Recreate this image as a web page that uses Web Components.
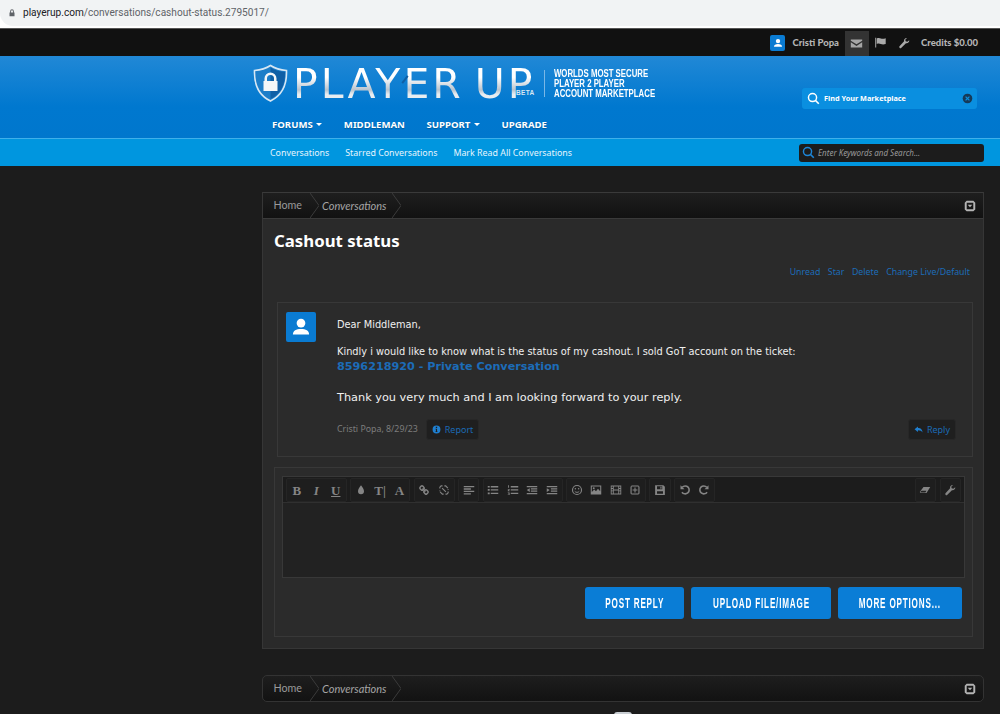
<!DOCTYPE html>
<html lang="en">
<head>
<meta charset="utf-8">
<title>Cashout status</title>
<style>
  html, body {margin: 0;padding: 0;background: #1c1c1c;}
  body {width: 1000px;height: 714px;overflow: hidden;font-family: "Noto Sans", sans-serif;}
</style>
</head>
<body>
<browser-bar url-host="playerup.com" url-path="/conversations/cashout-status.2795017/"></browser-bar>
<top-bar></top-bar>
<site-header></site-header>
<sub-nav></sub-nav>
<main-column>
  <content-panel>
    <crumb-bar></crumb-bar>
    <conv-title>Cashout status</conv-title>
    <conv-actions></conv-actions>
    <message-card></message-card>
    <reply-box></reply-box>
  </content-panel>
  <crumb-bar rounded></crumb-bar>
  <foot-mark></foot-mark>
</main-column>

<script>
const ICONS = {
  lock: '<path d="M5 7V5a3 3 0 0 1 6 0v2h1v6H4V7zm1.5 0h3V5a1.5 1.5 0 0 0-3 0z"/>',
  user: '<circle cx="8" cy="5.4" r="2.9"/><path d="M2.6 13c0-2.4 2.2-3.6 5.4-3.6s5.4 1.2 5.4 3.6z"/>',
  mail: '<path d="M1 3h14v1.6L8 9 1 4.6zM1 6.4 8 11l7-4.6V13H1z"/>',
  flag: '<path d="M1.5 2h1.2v12H1.5zM3.4 3c2-1 3.6-.6 5 0s3.200.7 6-.2v7c-2.600.9-4.300.7-6 0s-3-1-5 0z"/>',
  wrench: '<path d="M15 4.300c.3 2.500-1.900 4.500-4.400 3.900L4.500 14.400a1.500 1.500 0 0 1-2.400-.2 1.500 1.500 0 0 1-.1-2L8.100 5.700C7.500 3.200 9.500 1 12 1.200L9.700 3.600l.5 2.100 2.200.6z"/>',
  drop: '<path d="M8 1.500c2 3 4 5 4 8a4 4 0 0 1-8 0c0-3 2-5 4-8z"/>',
  link: '<path fill="none" stroke="currentColor" stroke-width="1.900" d="m2.800 4.300 1.500-1.500a1.500 1.500 0 0 1 2 0l1.700 1.700a1.500 1.500 0 0 1 0 2L6.500 8a1.500 1.500 0 0 1-2 0L2.800 6.300a1.500 1.500 0 0 1 0-2zM8 9.500 9.500 8a1.500 1.500 0 0 1 2 0l1.700 1.700a1.500 1.500 0 0 1 0 2l-1.500 1.500a1.500 1.500 0 0 1-2 0L8 11.500a1.500 1.500 0 0 1 0-2zM6 6l4 4"/>',
  unlink: '<path fill="none" stroke="currentColor" stroke-width="1.500" d="M6 2.500H4.200L2.500 4.200V6M2.500 8.500v1M10 13.500h1.800l1.700-1.700V10M13.500 7.500v-1M8.500 2.500h1.700l3 3M7.500 13.500H5.800l-3-3M5.500 5.500l5 5"/>',
  alignLeft: '<path d="M1 2.500h14v1.700H1zM1 5.800h9.500v1.700H1zM1 9h14v1.700H1zM1 12.200h9.500v1.700H1z"/>',
  listUl: '<path d="M1 2.500h2.600v2.300H1zM1 6.800h2.600v2.300H1zM1 11.200h2.600v2.300H1zM5 2.800h10v1.700H5zM5 7.100h10v1.700H5zM5 11.500h10v1.700H5z"/>',
  listOl: '<path d="M1.500 1.500h1.200v3.400H1.500zM1 6.500h2.500v1L2.200 8.800h1.300v.8H1v-.9l1.400-1.400H1zM1 11.200h2.500v3.500H1v-.8h1.500v-.5H1.400v-.7h1.100v-.6H1zM5 2.800h10v1.700H5zM5 7.100h10v1.700H5zM5 11.500h10v1.700H5z"/>',
  outdent: '<path d="M1 2.500h14v1.700H1zM6.500 5.800H15v1.400H6.500zM6.500 8.800H15v1.400H6.500zM1 12h14v1.700H1zM5 5.500v5L1 8z"/>',
  indent: '<path d="M1 2.500h14v1.700H1zM6.500 5.800H15v1.400H6.500zM6.500 8.800H15v1.400H6.500zM1 12h14v1.700H1zM1 5.500v5L5 8z"/>',
  smile: '<circle cx="8" cy="8" r="6" fill="none" stroke="currentColor" stroke-width="1.500"/><circle cx="5.800" cy="6.400" r="1"/><circle cx="10.200" cy="6.400" r="1"/><path fill="none" stroke="currentColor" stroke-width="1.300" d="M5 9.800c1.500 1.800 4.500 1.800 6 0"/>',
  image: '<path fill-rule="evenodd" d="M1 2h14v12H1zM2.400 3.400v7.200l3.200-3.200 2.400 2.200 2.600-3.200 3 3.400V3.400zM5 4.400a1.300 1.300 0 1 1 0 2.600 1.300 1.300 0 0 1 0-2.600z"/>',
  film: '<path fill-rule="evenodd" d="M1 2h14v12H1zM2.200 3.200v2h1.600v-2zM2.200 6.500v2h1.600v-2zM2.200 9.800v3h1.600v-3zM12.200 3.200v2h1.600v-2zM12.200 6.500v2h1.600v-2zM12.200 9.800v3h1.600v-3zM5 3.200v4.200h6V3.200zM5 8.600v4.200h6V8.600z"/>',
  plusBox: '<path fill-rule="evenodd" d="M3.500 2h9L14 3.500v9L12.500 14h-9L2 12.500v-9zM3.500 3.400v9.200h9V3.400zM7.300 4.800h1.400v2.500h2.500v1.400H8.700v2.500H7.300V8.700H4.800V7.300h2.500z"/>',
  save: '<path fill-rule="evenodd" d="M1.500 1.500h11l2 2v11h-13zM4 3v4h7V3zM8.500 3.600h1.500v2.800H8.500zM4 9.500V13h8V9.500z"/>',
  undo: '<path fill="none" stroke="currentColor" stroke-width="2.100" d="M4.300 4.300a5.300 5.300 0 1 1-.4 6.600"/><path d="M2 1.500 7.300 7H2z"/>',
  redo: '<path fill="none" stroke="currentColor" stroke-width="2.100" d="M11.700 4.300a5.300 5.300 0 1 0 .4 6.600"/><path d="M14 1.500 8.700 7H14z"/>',
  eraser: '<path d="M6 4h9L10 12H2.500L1 10.500z"/><path fill="#222" d="M3.300 9 2 10.400l1 1h5.500l1.400-2.400z"/>',
  search: '<circle cx="6.800" cy="6.800" r="5" fill="none" stroke="currentColor" stroke-width="1.800"/><path fill="none" stroke="currentColor" stroke-width="2" d="m10.500 10.500 4 4"/>',
  info: '<path fill-rule="evenodd" d="M8 1a7 7 0 1 1 0 14A7 7 0 0 1 8 1zM6.800 3.200v2.200h2.400V3.200zM6.300 6.500v1.300h.7v3.100h-.7v1.400h3.400v-1.400H9V6.500z"/>',
  reply: '<path d="M7 2.500v3c4.500 0 8 2.200 8 8-1.300-2.800-3.800-4-8-4v3L1 7.500z"/>',
  collapse: '<path fill-rule="evenodd" d="M3.500 1h9L15 3.500v9L12.500 15h-9L1 12.500v-9zM3.600 3.800v8.400h8.800V3.800zM5 6.300h6L8 9.800z"/>',
  clear: '<circle cx="8" cy="8" r="7"/><path fill="none" stroke="#0a8fe0" stroke-width="1.800" d="m5.200 5.200 5.600 5.600m0-5.600-5.600 5.600"/>'
};

class UiIcon extends HTMLElement {
  connectedCallback() {
    const size = this.getAttribute('size') || 16;
    const path = ICONS[this.getAttribute('name')] || '';
    this.attachShadow({ mode: 'open' }).innerHTML = `
      <style>
      :host {display: inline-flex;align-items: center;justify-content: center;line-height: 0;flex: none;}
      svg {display: block;fill: currentColor;}
      </style>
      <svg width="${size}" height="${size}" viewBox="0 0 16 16">${path}</svg>`;
  }
}
customElements.define('ui-icon', UiIcon);

class BrowserBar extends HTMLElement {
  connectedCallback() {
    this.attachShadow({ mode: 'open' }).innerHTML = `
      <style>
      :host {display: block;height: 29px;background: #fff;box-sizing: border-box;border-bottom: 1px solid #555;}
      .pill {height: 26px;background: #f1f3f4;border-radius: 0 0 0 13px;display: flex;align-items: center;padding-left: 7px;gap: 6px;font: 10.100px/1 Roboto, sans-serif;color: #5f6368;}
      ui-icon {color: #5f6368;}
      b {font-weight: 400;color: #202124;}
      </style>
      <div class="pill"><ui-icon name="lock" size="10"></ui-icon><span><b>${this.getAttribute('url-host')}</b>${this.getAttribute('url-path')}</span></div>`;
  }
}
customElements.define('browser-bar', BrowserBar);

class TopBar extends HTMLElement {
  connectedCallback() {
    this.attachShadow({ mode: 'open' }).innerHTML = `
      <style>
      :host {display: flex;justify-content: flex-end;align-items: center;height: 27px;background: #111;padding-right: 22px;color: #b5b5b5;font: 900 9.500px/1 Lato, sans-serif;}
      .av {width: 15px;height: 16px;border-radius: 2px;background: #0a7bd2;color: #fff;margin-right: 7px;display: flex;align-items: center;justify-content: center;}
      .cell {height: 25px;align-self: flex-end;width: 24px;background: #333;margin: 0 6px 0 6px;display: flex;align-items: center;justify-content: center;color: #a6a6a6;}
      .ic {width: 12px;display: flex;justify-content: center;margin-right: 11px;color: #aaa;}
      </style>
      <span class="av"><ui-icon name="user" size="12"></ui-icon></span>
      <span>Cristi Popa</span>
      <span class="cell"><ui-icon name="mail" size="13"></ui-icon></span>
      <span class="ic"><ui-icon name="flag" size="13"></ui-icon></span>
      <span class="ic"><ui-icon name="wrench" size="12"></ui-icon></span>
      <span>Credits $0.00</span>`;
  }
}
customElements.define('top-bar', TopBar);

class SiteHeader extends HTMLElement {
  connectedCallback() {
    this.attachShadow({ mode: 'open' }).innerHTML = `
      <style>
      :host {display: flex;justify-content: space-between;box-sizing: border-box;height: 82px;padding: 8px 23px 0 253px;background: linear-gradient(#2188d6, #0078cf 62%, #0077cd);}
      .brand {display: flex;align-items: center;height: 38px;}
      .shield {margin-right: 5px;}
      .word {position: relative;width: 251px;height: 38px;font: 400 41px/40px "DejaVu Sans", sans-serif;white-space: nowrap;letter-spacing: 3px;word-spacing: -5px;background: linear-gradient(#fff 35%, #b9c4cf 68%, #e8edf1 80%);-webkit-background-clip: text;background-clip: text;color: transparent;}
      .beta {position: absolute;left: 223px;bottom: 6px;font: bold 6.500px/1 "Liberation Sans", sans-serif;letter-spacing: .3px;word-spacing: 0;-webkit-text-fill-color: #d8e6f2;}
      .slash {position: absolute;left: 111px;top: 11px;width: 2px;height: 9px;background: #0f5fa6;transform: rotate(38deg);}
      .rule {width: 1px;height: 27px;background: #7ab7e6;margin-right: 9px;}
      .tag {width: 101px;font: bold 11px/10px "Liberation Sans", sans-serif;color: #fff;white-space: nowrap;transform: scaleX(.71);transform-origin: left center;}
      nav {display: flex;gap: 21.600px;padding: 18px 0 0 19px;font: bold 9.600px/1 "Noto Sans", sans-serif;color: #fff;text-shadow: 0 1px 1px rgba(0,0,0,.25);}
      nav i {display: inline-block;border: 3px solid transparent;border-top-color: #fff;border-bottom: 0;vertical-align: 2px;margin-left: 1px;}
      .find {display: flex;align-items: center;width: 175px;height: 21px;margin-top: 24px;background: #0a8fe0;border-radius: 3px;box-sizing: border-box;padding: 0 4px 0 5px;color: #fff;font: bold 7.300px/1 "Noto Sans", sans-serif;gap: 4px;}
      .find span {flex: 1;}
      .find .x {color: #163a58;}
      </style>
      <div>
        <div class="brand">
          <svg class="shield" width="35" height="38" viewBox="0 0 35 38">
            <path d="M17.500 1.500C12 5 7 6 1.500 6.500 1 20 5 31 17.500 37 30 31 34 20 33.500 6.500 28 6 23 5 17.500 1.500z" fill="#1d7ec9" stroke="#d7e7f4" stroke-width="1.600"/>
            <path d="M17.500 3.500V35C28 30 32.500 20 32 8c-5-.5-10-1.500-14.500-4.500z" fill="#0f5fa6"/>
            <path fill="#f4f6f8" fill-rule="evenodd" d="M11.500 17v-2.500a6 6 0 0 1 12 0V17h1v10h-14V17zm2.500 0h7v-2.500a3.500 3.500 0 0 0-7 0z"/>
          </svg>
          <div class="word">PLAYER UP<span class="beta">BETA</span><i class="slash"></i></div>
          <span class="rule"></span>
          <div class="tag">WORLDS MOST SECURE<br>PLAYER 2 PLAYER<br>ACCOUNT MARKETPLACE</div>
        </div>
        <nav><span>FORUMS <i></i></span><span>MIDDLEMAN</span><span>SUPPORT <i></i></span><span>UPGRADE</span></nav>
      </div>
      <div class="find"><ui-icon name="search" size="13"></ui-icon><span>Find Your Marketplace</span><ui-icon class="x" name="clear" size="11"></ui-icon></div>`;
  }
}
customElements.define('site-header', SiteHeader);

class SubNav extends HTMLElement {
  connectedCallback() {
    this.attachShadow({ mode: 'open' }).innerHTML = `
      <style>
      :host {display: flex;align-items: center;justify-content: space-between;box-sizing: border-box;height: 28px;background: #0096df;border-top: 1px solid #3fb0ea;padding: 0 16px 0 270px;color: #e6f5fd;font: 8.850px/1 "Noto Sans", sans-serif;}
      .links {display: flex;gap: 16px;padding-top: 1px;}
      .search {display: flex;align-items: center;gap: 3px;width: 185px;height: 18px;box-sizing: border-box;padding-left: 3px;background: #1c1c1c;border-radius: 3px;color: #999;font-style: italic;font-size: 8px;}
      .search ui-icon {color: #1d86d8;}
      </style>
      <div class="links"><span>Conversations</span><span>Starred Conversations</span><span>Mark Read All Conversations</span></div>
      <div class="search"><ui-icon name="search" size="13"></ui-icon><span>Enter Keywords and Search...</span></div>`;
  }
}
customElements.define('sub-nav', SubNav);

class MainColumn extends HTMLElement {
  constructor() {
    super();
    this.attachShadow({ mode: 'open' }).innerHTML = `
      <style>
      :host {display: block;box-sizing: border-box;padding: 26px 16px 0 262px;background: #1c1c1c;}
      </style>
      <slot></slot>`;
  }
}
customElements.define('main-column', MainColumn);

class ContentPanel extends HTMLElement {
  constructor() {
    super();
    this.attachShadow({ mode: 'open' }).innerHTML = `
      <style>
      :host {display: block;box-sizing: border-box;height: 457px;margin-bottom: 26px;background: #2a2a2a;border: 1px solid #363636;border-top-color: #3a3a3a;}
      </style>
      <slot></slot>`;
  }
}
customElements.define('content-panel', ContentPanel);

class CrumbBar extends HTMLElement {
  connectedCallback() {
    const rounded = this.hasAttribute('rounded');
    this.attachShadow({ mode: 'open' }).innerHTML = `
      <style>
      :host {display: flex;align-items: center;justify-content: space-between;box-sizing: border-box;height: ${rounded ? 27 : 26}px;background: linear-gradient(#1e1e1e, #121212);color: #9a9a9a;font: 10.700px/1 Lato, sans-serif;${rounded ? 'border: 1px solid #333;border-radius: 5px;' : 'border-bottom: 1px solid #3a3a3a;'}}
      .trail {display: flex;align-items: center;height: 100%;}
      .seg {display: flex;align-items: center;height: 100%;padding: 0 8px 0 10.500px;}
      .cur {padding: 0 5px 0 3px;font-style: italic;font-size: 11px;color: #a5a5a5;}
      .chev {width: 9px;height: 100%;flex: none;display: block;}
      ui-icon {color: #b4b4b4;margin-right: 7px;}
      </style>
      <div class="trail">
        <span class="seg">Home</span>
        <svg class="chev" viewBox="0 0 9 26" preserveAspectRatio="none"><path d="M0 0l9 13-9 13" fill="none" stroke="#3c3c3c"/></svg>
        <span class="seg cur">Conversations</span>
        <svg class="chev" viewBox="0 0 9 26" preserveAspectRatio="none"><path d="M0 0l9 13-9 13" fill="none" stroke="#3c3c3c"/></svg>
      </div>
      <ui-icon name="collapse" size="12"></ui-icon>`;
  }
}
customElements.define('crumb-bar', CrumbBar);

class ConvTitle extends HTMLElement {
  constructor() {
    super();
    this.attachShadow({ mode: 'open' }).innerHTML = `
      <style>
      :host {display: block;padding: 10px 0 0 11px;color: #fff;font: bold 16.800px/24px "Noto Sans", sans-serif;}
      </style>
      <slot></slot>`;
  }
}
customElements.define('conv-title', ConvTitle);

class ConvActions extends HTMLElement {
  connectedCallback() {
    this.attachShadow({ mode: 'open' }).innerHTML = `
      <style>
      :host {display: flex;justify-content: flex-end;gap: 7.500px;height: 14px;padding: 12px 13px 0 0;color: #1c6cb8;font: 8.800px/14px "Noto Sans", sans-serif;}
      </style>
      <span>Unread</span><span>Star</span><span>Delete</span><span>Change Live/Default</span>`;
  }
}
customElements.define('conv-actions', ConvActions);

class SmallBtn extends HTMLElement {
  connectedCallback() {
    this.attachShadow({ mode: 'open' }).innerHTML = `
      <style>
      :host {display: inline-flex;align-items: center;gap: 4px;height: 19px;padding: 0 5px;background: #1f1f1f;border: 1px solid #272727;border-radius: 3px;color: #1b6ab5;font: 9px/1 "Noto Sans", sans-serif;}
      ui-icon {color: #1f7fd0;}
      </style>
      <ui-icon name="${this.getAttribute('icon')}" size="9"></ui-icon><slot></slot>`;
  }
}
customElements.define('small-btn', SmallBtn);

class MessageCard extends HTMLElement {
  connectedCallback() {
    this.attachShadow({ mode: 'open' }).innerHTML = `
      <style>
      :host {display: flex;gap: 21px;box-sizing: border-box;height: 155px;margin: 23px 10px 0 14px;padding: 9px 16px 0 8px;background: #2b2b2b;border: 1px solid #383838;}
      .av {width: 30px;height: 30px;flex: none;border-radius: 2px;background: #0a7bd2;color: #fff;display: flex;align-items: center;justify-content: center;}
      .body {flex: 1;color: #f0f0f0;font: 9.800px/14px "DejaVu Sans", sans-serif;min-width: 0;}
      p {margin: 0;}
      .dear {padding-top: 6px;}
      .kind {padding-top: 13px;}
      .tick {color: #1c6cb8;font-weight: bold;font-size: 11.200px;line-height: 15px;}
      .thanks {padding-top: 15px;font-size: 11.300px;line-height: 17px;}
      .foot {display: flex;align-items: center;justify-content: space-between;margin-top: 13px;color: #7d7d7d;font: 8.800px/1 "Noto Sans", sans-serif;}
      .who {display: flex;align-items: center;gap: 8px;}
      </style>
      <div class="av"><ui-icon name="user" size="24"></ui-icon></div>
      <div class="body">
        <p class="dear">Dear Middleman,</p>
        <p class="kind">Kindly i would like to know what is the status of my cashout. I sold GoT account on the ticket:</p>
        <p class="tick">8596218920 - Private Conversation</p>
        <p class="thanks">Thank you very much and I am looking forward to your reply.</p>
        <div class="foot">
          <span class="who"><span>Cristi Popa, 8/29/23</span><small-btn icon="info">Report</small-btn></span>
          <small-btn icon="reply">Reply</small-btn>
        </div>
      </div>`;
  }
}
customElements.define('message-card', MessageCard);

class ToolGroup extends HTMLElement {
  constructor() {
    super();
    this.attachShadow({ mode: 'open' }).innerHTML = `
      <style>
      :host {display: flex;height: 24px;background: #1e1e1e;border: 1px solid #252525;border-radius: 2px;box-sizing: border-box;}
      </style>
      <slot></slot>`;
  }
}
customElements.define('tool-group', ToolGroup);

class ToolBtn extends HTMLElement {
  connectedCallback() {
    const name = this.getAttribute('icon');
    this.attachShadow({ mode: 'open' }).innerHTML = `
      <style>
      :host {display: flex;align-items: center;justify-content: center;width: 19.500px;color: #858585;font: bold 13px/1 "Liberation Serif", serif;}
      </style>
      ${name ? `<ui-icon name="${name}" size="12"></ui-icon>` : '<slot></slot>'}`;
  }
}
customElements.define('tool-btn', ToolBtn);

class BlueBtn extends HTMLElement {
  constructor() {
    super();
    this.attachShadow({ mode: 'open' }).innerHTML = `
      <style>
      :host {display: flex;align-items: center;justify-content: center;height: 32px;box-sizing: border-box;background: #0a7dd6;border-radius: 3px;color: #fff;font: bold 14px/1 "Liberation Sans", sans-serif;letter-spacing: 1.400px;white-space: nowrap;}
      span {display: inline-block;transform: scaleX(.58);}
      </style>
      <span><slot></slot></span>`;
  }
}
customElements.define('blue-btn', BlueBtn);

class ReplyBox extends HTMLElement {
  connectedCallback() {
    this.attachShadow({ mode: 'open' }).innerHTML = `
      <style>
      :host {display: block;box-sizing: border-box;height: 170px;margin: 10px 10px 0 11px;padding: 8px 7px 0 7px;background: #2b2b2b;border: 1px solid #383838;}
      .editor {height: 102px;box-sizing: border-box;background: #222;border: 1px solid #383838;}
      .tools {display: flex;justify-content: space-between;height: 26px;box-sizing: border-box;padding: 1px 3px 0 3px;background: #1c1c1c;border-bottom: 1px solid #303030;}
      .row {display: flex;gap: 3.300px;}
      .btns {display: flex;justify-content: flex-end;gap: 7px;margin-top: 9px;padding-right: 3px;}
      .b1 {width: 99px;}
      .b2 {width: 140px;}
      .b3 {width: 124px;}
      </style>
      <div class="editor">
        <div class="tools">
          <div class="row">
            <tool-group><tool-btn>B</tool-btn><tool-btn><i>I</i></tool-btn><tool-btn><u>U</u></tool-btn></tool-group>
            <tool-group><tool-btn icon="drop"></tool-btn><tool-btn>T|</tool-btn><tool-btn>A</tool-btn></tool-group>
            <tool-group><tool-btn icon="link"></tool-btn><tool-btn icon="unlink"></tool-btn></tool-group>
            <tool-group><tool-btn icon="alignLeft"></tool-btn></tool-group>
            <tool-group><tool-btn icon="listUl"></tool-btn><tool-btn icon="listOl"></tool-btn><tool-btn icon="outdent"></tool-btn><tool-btn icon="indent"></tool-btn></tool-group>
            <tool-group><tool-btn icon="smile"></tool-btn><tool-btn icon="image"></tool-btn><tool-btn icon="film"></tool-btn><tool-btn icon="plusBox"></tool-btn></tool-group>
            <tool-group><tool-btn icon="save"></tool-btn></tool-group>
            <tool-group><tool-btn icon="undo"></tool-btn><tool-btn icon="redo"></tool-btn></tool-group>
          </div>
          <div class="row">
            <tool-group><tool-btn icon="eraser"></tool-btn></tool-group>
            <tool-group><tool-btn icon="wrench"></tool-btn></tool-group>
          </div>
        </div>
      </div>
      <div class="btns">
        <blue-btn class="b1">POST REPLY</blue-btn>
        <blue-btn class="b2">UPLOAD FILE/IMAGE</blue-btn>
        <blue-btn class="b3">MORE OPTIONS...</blue-btn>
      </div>`;
  }
}
customElements.define('reply-box', ReplyBox);

class FootMark extends HTMLElement {
  constructor() {
    super();
    this.attachShadow({ mode: 'open' }).innerHTML = `
      <style>
      :host {display: flex;justify-content: center;padding-top: 10px;}
      i {display: block;width: 18px;height: 3px;background: #c9ced3;border-radius: 9px 9px 0 0;}
      </style>
      <i></i>`;
  }
}
customElements.define('foot-mark', FootMark);
</script>
</body>
</html>
